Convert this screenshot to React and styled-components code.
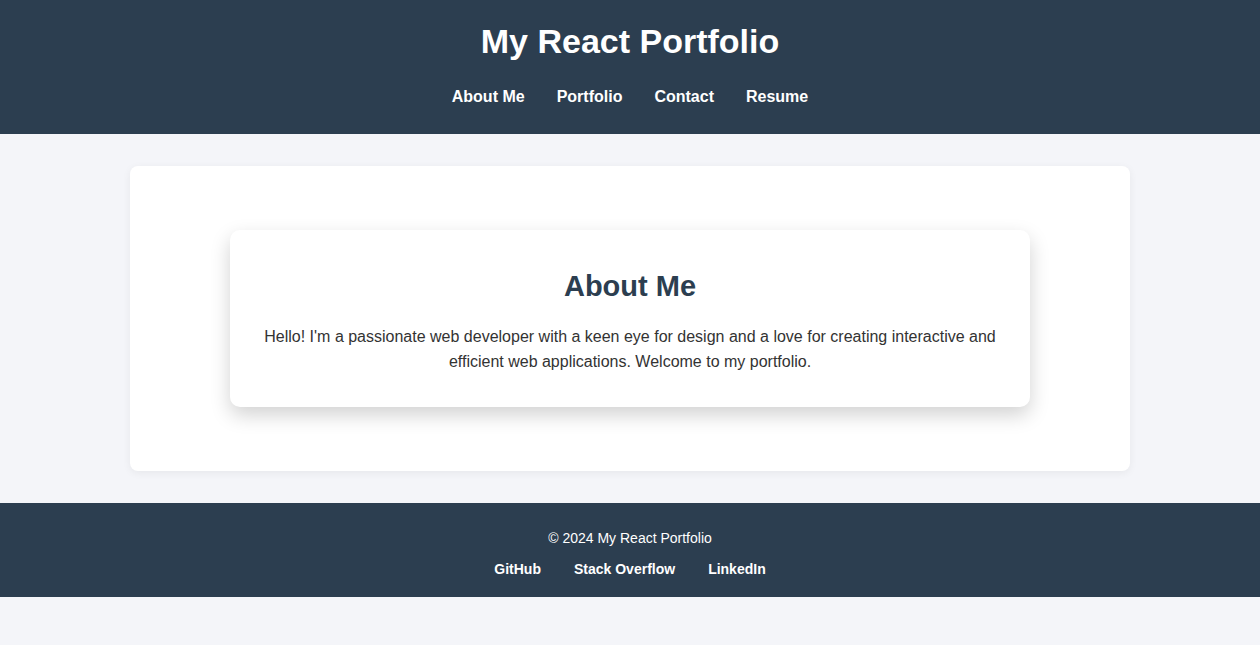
import React from 'react';
import styled, { createGlobalStyle } from 'styled-components';

const GlobalStyle = createGlobalStyle`
  * { box-sizing: border-box; }
  body {
    margin: 0;
    background-color: #f4f5f9;
    font-family: "Liberation Sans", Arial, sans-serif;
    color: #333333;
  }
`

const Header = styled.header`
  background-color: #2c3e50;
  color: #ffffff;
  text-align: center;
  padding: 22px 0 20px;
`
const Title = styled.h1`
  margin: 0 0 19px;
  font-size: 34px;
  line-height: 39px;
  font-weight: bold;
`
const NavList = styled.nav`
  display: flex;
  justify-content: center;
  gap: 32px;
`
const NavLink = styled.a`
  color: #ffffff;
  text-decoration: none;
  font-weight: bold;
  font-size: 16px;
  line-height: 18px;
  padding: 8px 0;
`

const Main = styled.main`
  padding: 32px 0;
`
const Panel = styled.section`
  max-width: 1000px;
  margin: 0 auto;
  background-color: #ffffff;
  border-radius: 8px;
  box-shadow: 0 2px 8px rgba(0, 0, 0, 0.06);
  padding: 64px 0;
`
const Card = styled.div`
  max-width: 800px;
  margin: 0 auto;
  background-color: #ffffff;
  border-radius: 10px;
  box-shadow: 0 8px 20px rgba(0, 0, 0, 0.18);
  padding: 32px 32px 33px;
  text-align: center;
`
const CardTitle = styled.h2`
  margin: 8px 0 21px;
  font-size: 29px;
  line-height: 33px;
  color: #2c3e50;
`
const Text = styled.p`
  margin: 0;
  font-size: 16px;
  line-height: 25px;
  color: #333333;
`

const Footer = styled.footer`
  background-color: #2c3e50;
  color: #ffffff;
  text-align: center;
  padding: 27px 0 20px;
`
const Copy = styled.p`
  margin: 0 0 15px;
  font-size: 14px;
  line-height: 16px;
`
const FooterLinks = styled.div`
  display: flex;
  justify-content: center;
  gap: 33px;
`
const FooterLink = styled.a`
  color: #ffffff;
  text-decoration: none;
  font-weight: bold;
  font-size: 14px;
  line-height: 16px;
`

const App = () => {
  return (
    <>
      <GlobalStyle />
      <Header>
        <Title>My React Portfolio</Title>
        <NavList>
          <NavLink href="#about">About Me</NavLink>
          <NavLink href="#portfolio">Portfolio</NavLink>
          <NavLink href="#contact">Contact</NavLink>
          <NavLink href="#resume">Resume</NavLink>
        </NavList>
      </Header>

      <Main>
        <Panel>
          <Card>
            <CardTitle>About Me</CardTitle>
            <Text>
              Hello! I'm a passionate web developer with a keen eye for design and a love for creating interactive and efficient web applications. Welcome to my portfolio.
            </Text>
          </Card>
        </Panel>
      </Main>

      <Footer>
        <Copy>© 2024 My React Portfolio</Copy>
        <FooterLinks>
          <FooterLink href="#github">GitHub</FooterLink>
          <FooterLink href="#stackoverflow">Stack Overflow</FooterLink>
          <FooterLink href="#linkedin">LinkedIn</FooterLink>
        </FooterLinks>
      </Footer>
    </>
  );
}

export default App;
